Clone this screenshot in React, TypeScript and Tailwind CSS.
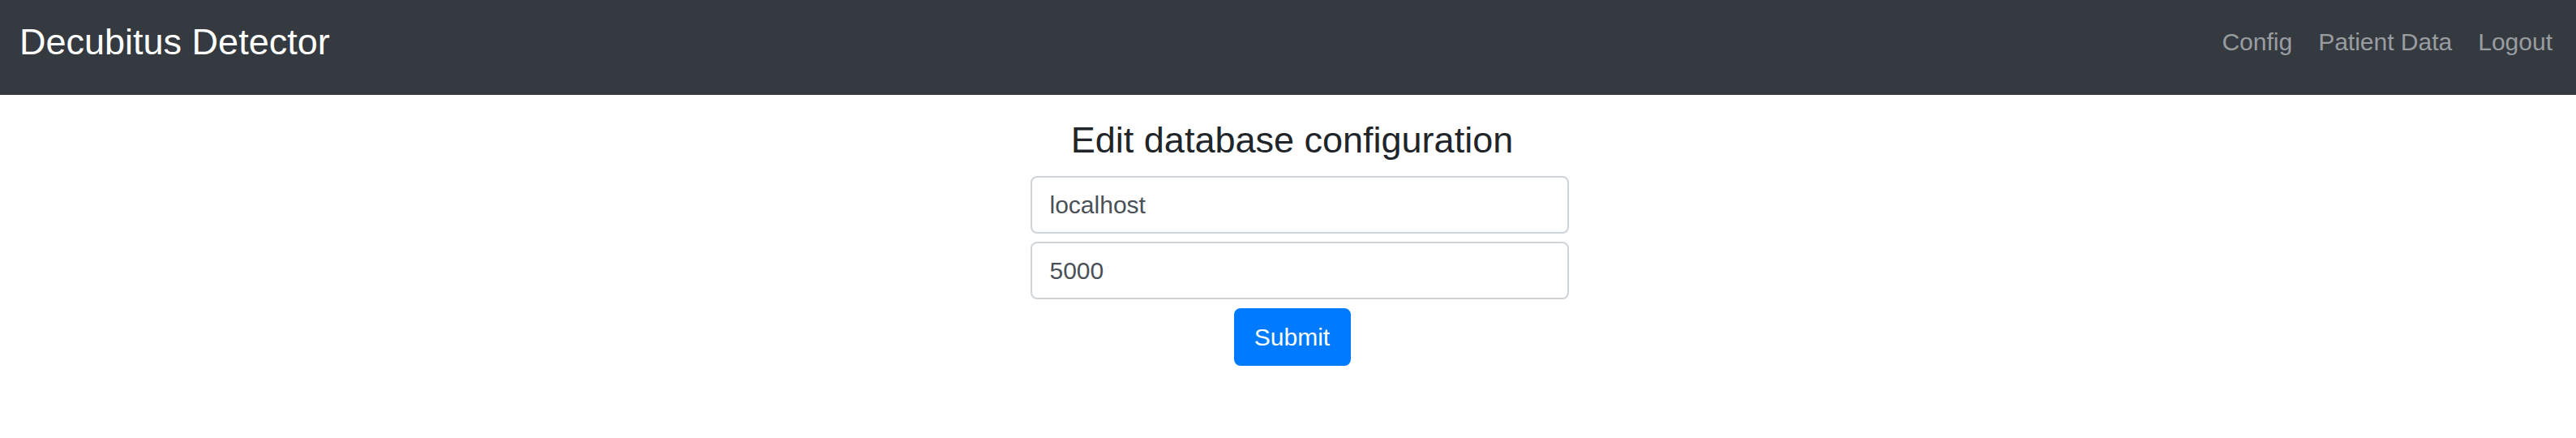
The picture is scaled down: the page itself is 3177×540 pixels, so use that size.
import { useState } from 'react'

const NAV_LINKS = ['Config', 'Patient Data', 'Logout']

export default function App() {
  const [host, setHost] = useState('localhost')
  const [port, setPort] = useState('5000')

  return (
    <div className="min-h-[540px] bg-white" style={{ fontFamily: '"Liberation Sans", Arial, sans-serif' }}>
      {/* Navbar */}
      <nav className="flex h-[117px] items-start justify-between bg-[#343a40] pl-[24px] pr-[29px] pt-[18px]">
        <a href="#" className="text-[45px] leading-[1.5] text-white">Decubitus Detector</a>
        <div className="mt-[11px] flex gap-[32px]">
          {NAV_LINKS.map(link => (
            <a key={link} href="#" className="text-[30px] leading-[1.5] text-[#9a9da0]">{link}</a>
          ))}
        </div>
      </nav>

      {/* Config form */}
      <div className="flex flex-col items-center pl-[10px] pt-[29px]">
        <h3 className="text-[45px] leading-[1.2] text-[#212529]">Edit database configuration</h3>
      </div>
      <form className="mx-auto mt-[17px] flex w-[692px] flex-col pl-[28px]" onSubmit={e => e.preventDefault()}>
        <input
          value={host}
          onChange={e => setHost(e.target.value)}
          className="h-[71px] w-full rounded-[8px] border-2 border-[#ced4da] px-[22px] text-[30px] text-[#495057] outline-none"
        />
        <input
          value={port}
          onChange={e => setPort(e.target.value)}
          className="mt-[10px] h-[71px] w-full rounded-[8px] border-2 border-[#ced4da] px-[22px] text-[30px] text-[#495057] outline-none"
        />
      </form>
      <div className="mt-[11px] flex justify-center pl-[10px]">
        <button className="h-[71px] w-[144px] rounded-[8px] bg-[#007bff] text-[30px] text-white">Submit</button>
      </div>
    </div>
  )
}
